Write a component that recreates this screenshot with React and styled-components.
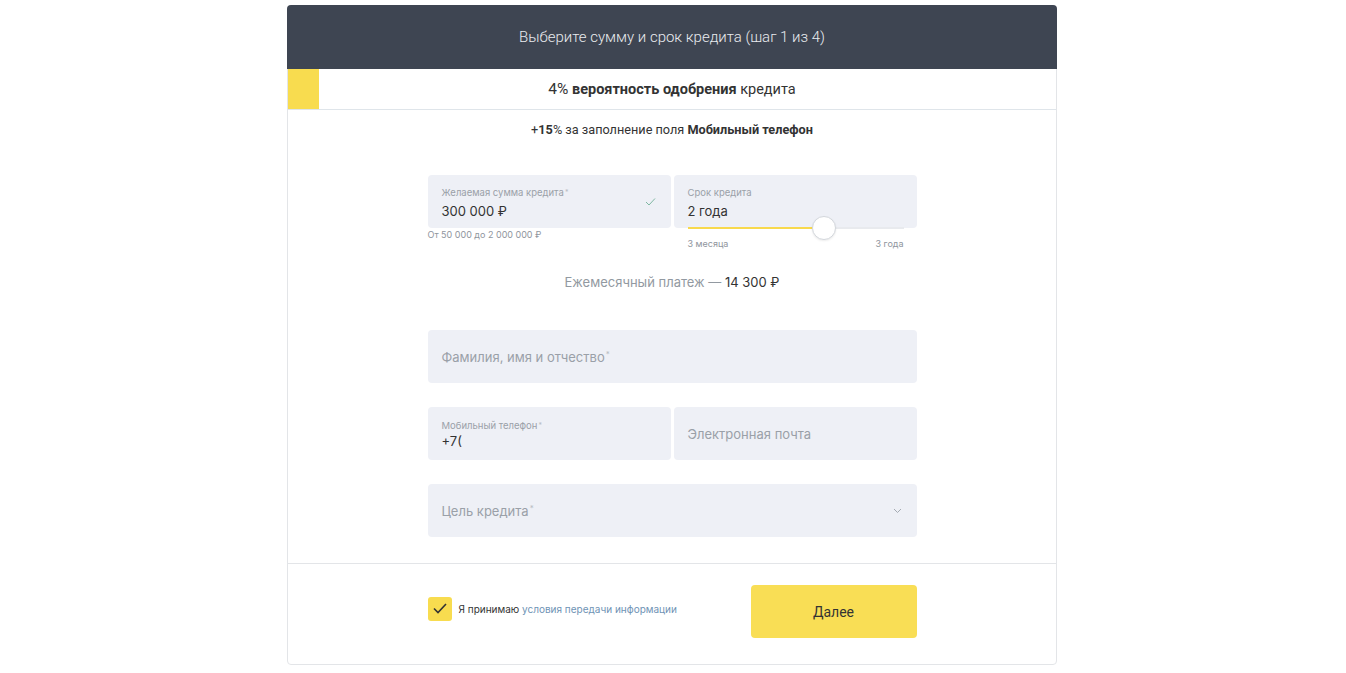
import React, { useState } from "react";
import styled, { createGlobalStyle } from "styled-components";

const GlobalStyle = createGlobalStyle`
  body {
    margin: 0;
    background: #ffffff;
    font-family: Inter, "Noto Sans", sans-serif;
    color: #333333;
  }
`;

const Card = styled.div`
  width: 768px;
  margin: 5px calc(50% - 386px) 0;
  border: 1px solid #e3e5e8;
  border-radius: 4px;
  background: #fff;
`;

const Header = styled.div`
  height: 64px;
  margin: -1px -1px 0;
  background: #3e4552;
  border-radius: 4px 4px 0 0;
  color: #e9ebef;
  font-family: Roboto, sans-serif;
  font-weight: 300;
  font-size: 15px;
  display: flex;
  align-items: center;
  justify-content: center;
`;

const Progress = styled.div`
  position: relative;
  height: 40px;
  border-bottom: 1px solid #dfe5ea;
  display: flex;
  align-items: center;
  justify-content: center;
  font-family: Roboto, sans-serif;
  font-size: 14.5px;
  color: #333;
  b {
    font-weight: 700;
  }
`;

const ProgressFill = styled.div`
  position: absolute;
  left: 0;
  top: 0;
  bottom: 0;
  background: #f8dc4f;
`;

const ProgressText = styled.span`
  position: relative;
  span {
    font-size: 15.5px;
  }
`;

const Bonus = styled.div`
  margin-top: 12px;
  line-height: 16px;
  text-align: center;
  font-family: Roboto, sans-serif;
  font-size: 12.7px;
  color: #333;
  b {
    font-weight: 700;
  }
`;

const Form = styled.div`
  width: 489px;
  margin: 37px auto 0;
`;

const Row = styled.div`
  display: grid;
  grid-template-columns: 1fr 1fr;
  gap: 3px;
  margin-top: ${(p) => p.$top || 0}px;
`;

const Column = styled.div`
  display: flex;
  flex-direction: column;
`;

const Field = styled.div`
  position: relative;
  height: 53px;
  margin-top: ${(p) => p.$top || 0}px;
  background: #eef0f6;
  border-radius: 4px;
  padding: 0 14px;
  display: flex;
  flex-direction: column;
  justify-content: center;
  box-sizing: border-box;
`;

const Label = styled.div`
  font-size: 9.5px;
  line-height: 12px;
  color: #9aa0a8;
  margin-top: 3px;
  sup {
    font-size: 7px;
    color: #b8bdc4;
    vertical-align: top;
    margin-left: 1px;
  }
`;

const Value = styled.div`
  font-size: 13px;
  line-height: 18px;
  margin-top: ${(p) => (p.$tight ? 0 : 3)}px;
  color: #333;
`;

const Placeholder = styled.div`
  font-size: 13px;
  color: #9aa0a8;
  sup {
    font-size: 8px;
    color: #b8bdc4;
    vertical-align: top;
    margin-left: 1px;
  }
`;

const FieldIcon = styled.div`
  position: absolute;
  right: 15px;
  top: 50%;
  transform: translateY(-50%);
  display: flex;
`;

const Hint = styled.div`
  font-size: 9px;
  line-height: 12px;
  margin-top: 1px;
  color: #8f959d;
`;

const SliderArea = styled.div`
  position: relative;
  padding: 0 13px 0 14px;
`;

const Track = styled.div`
  position: relative;
  height: 2px;
  margin-top: -1px;
  background: #e8eaee;
`;

const TrackFill = styled.div`
  position: absolute;
  left: 0;
  top: 0;
  bottom: 0;
  background: #f8d94c;
`;

const Thumb = styled.div`
  position: absolute;
  top: -11px;
  width: 22px;
  height: 22px;
  margin-left: -12px;
  border-radius: 50%;
  background: #fff;
  border: 1px solid #d3d7dc;
  box-shadow: 0 1px 2px rgba(0, 0, 0, 0.08);
`;

const SliderLabels = styled.div`
  display: flex;
  justify-content: space-between;
  margin-top: 9px;
  font-size: 9px;
  line-height: 12px;
  color: #8f959d;
`;

const Payment = styled.div`
  margin-top: 23px;
  line-height: 18px;
  text-align: center;
  font-size: 13px;
  color: #9299a1;
  span {
    color: #333;
  }
`;

const Footer = styled.div`
  border-top: 1px solid #e3e5e8;
  margin-top: 26px;
  padding: 21px 0 26px;
`;

const FooterInner = styled.div`
  width: 489px;
  margin: 0 auto;
  display: flex;
  align-items: center;
  justify-content: space-between;
`;

const Agree = styled.label`
  display: flex;
  align-items: center;
  gap: 7px;
  font-size: 10px;
  color: #333;
  cursor: pointer;
  margin-top: -6px;
`;

const Checkbox = styled.span`
  width: 24px;
  height: 24px;
  border-radius: 3px;
  background: ${(p) => (p.$checked ? "#f8dc4f" : "#eef0f6")};
  display: flex;
  align-items: center;
  justify-content: center;
`;

const Link = styled.a`
  color: #6f93b5;
  text-decoration: none;
`;

const Button = styled.button`
  width: 166px;
  height: 53px;
  border: none;
  border-radius: 4px;
  background: #f9de55;
  font-family: Roboto, sans-serif;
  font-size: 14px;
  color: #333;
  cursor: pointer;
`;

const App = () => {
  const [agree, setAgree] = useState(true);
  const pos = 63;

  return (
    <>
      <GlobalStyle />
      <Card>
        <Header>Выберите сумму и срок кредита (шаг 1 из 4)</Header>
        <Progress>
          <ProgressFill style={{ width: "4%" }} />
          <ProgressText>
            <span>4%</span> <b>вероятность одобрения</b> кредита
          </ProgressText>
        </Progress>
        <Bonus>
          +<b>15</b>% за заполнение поля <b>Мобильный телефон</b>
        </Bonus>

        <Form>
          <Row>
            <Column>
              <Field>
                <Label>
                  Желаемая сумма кредита<sup>*</sup>
                </Label>
                <Value>300 000 ₽</Value>
                <FieldIcon>
                  <svg width="11" height="9" viewBox="0 0 11 9" fill="none">
                    <path d="M1 4.5L4 7.5L10 1" stroke="#7fb7a2" strokeWidth="1" />
                  </svg>
                </FieldIcon>
              </Field>
              <Hint>От 50 000 до 2 000 000 ₽</Hint>
            </Column>
            <Column>
              <Field>
                <Label>Срок кредита</Label>
                <Value>2 года</Value>
              </Field>
              <SliderArea>
                <Track>
                  <TrackFill style={{ width: `${pos}%` }} />
                  <Thumb style={{ left: `${pos}%` }} />
                </Track>
                <SliderLabels>
                  <span>3 месяца</span>
                  <span>3 года</span>
                </SliderLabels>
              </SliderArea>
            </Column>
          </Row>

          <Payment>
            Ежемесячный платеж — <span>14 300 ₽</span>
          </Payment>

          <Field $top={39}>
            <Placeholder>
              Фамилия, имя и отчество<sup>*</sup>
            </Placeholder>
          </Field>

          <Row $top={24}>
            <Field>
              <Label>
                Мобильный телефон<sup>*</sup>
              </Label>
              <Value $tight>+7(</Value>
            </Field>
            <Field>
              <Placeholder>Электронная почта</Placeholder>
            </Field>
          </Row>

          <Field $top={24}>
            <Placeholder>
              Цель кредита<sup>*</sup>
            </Placeholder>
            <FieldIcon>
              <svg width="9" height="6" viewBox="0 0 9 6" fill="none">
                <path d="M1 1L4.5 4.5L8 1" stroke="#a4aab2" strokeWidth="1" />
              </svg>
            </FieldIcon>
          </Field>
        </Form>

        <Footer>
          <FooterInner>
            <Agree onClick={() => setAgree(!agree)}>
              <Checkbox $checked={agree}>
                {agree && (
                  <svg width="14" height="11" viewBox="0 0 14 11" fill="none">
                    <path d="M1 5.5L5 9.5L13 1" stroke="#333" strokeWidth="1.6" />
                  </svg>
                )}
              </Checkbox>
              <span>
                Я принимаю <Link href="#">условия передачи информации</Link>
              </span>
            </Agree>
            <Button>Далее</Button>
          </FooterInner>
        </Footer>
      </Card>
    </>
  );
};

export default App;
